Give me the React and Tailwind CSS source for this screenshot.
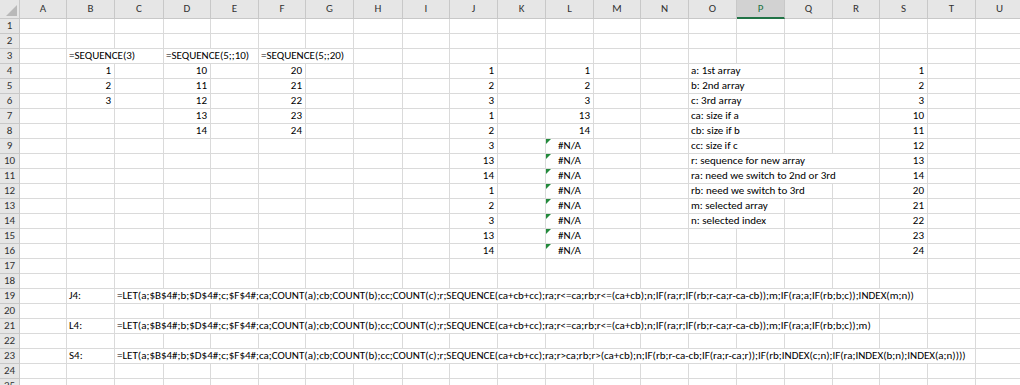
import React from "react";

const COLS = "ABCDEFGHIJKLMNOPQRSTU".split("");
const SPAN = {
  1: "col-span-1",
  2: "col-span-2",
  3: "col-span-3",
  4: "col-span-4",
  16: "col-span-16",
  17: "col-span-17",
  18: "col-span-18",
};

const ci = (c) => COLS.indexOf(c);

const data = {};
const put = (ref, v) => {
  const m = ref.match(/^([A-U])(\d+)$/);
  const r = +m[2];
  data[r] = data[r] || {};
  data[r][ci(m[1])] = v;
};

const num = (t) => ({ t: String(t), a: "r", s: 1 });
const txt = (t, s) => ({ t, a: "l", s });

put("B3", txt("=SEQUENCE(3)", 2));
put("D3", txt("=SEQUENCE(5;;10)", 2));
put("F3", txt("=SEQUENCE(5;;20)", 2));
[1, 2, 3].forEach((v, i) => put("B" + (4 + i), num(v)));
[10, 11, 12, 13, 14].forEach((v, i) => put("D" + (4 + i), num(v)));
[20, 21, 22, 23, 24].forEach((v, i) => put("F" + (4 + i), num(v)));
[1, 2, 3, 1, 2, 3, 13, 14, 1, 2, 3, 13, 14].forEach((v, i) =>
  put("J" + (4 + i), num(v))
);
[1, 2, 3, 13, 14].forEach((v, i) => put("L" + (4 + i), num(v)));
for (let r = 9; r <= 16; r++) put("L" + r, { t: "#N/A", a: "c", s: 1, tri: true });
[1, 2, 3, 10, 11, 12, 13, 14, 20, 21, 22, 23, 24].forEach((v, i) =>
  put("S" + (4 + i), num(v))
);
[
  ["a: 1st array", 2],
  ["b: 2nd array", 2],
  ["c: 3rd array", 2],
  ["ca: size if a", 2],
  ["cb: size if b", 2],
  ["cc: size if c", 2],
  ["r: sequence for new array", 4],
  ["ra: need we switch to 2nd or 3rd", 4],
  ["rb: need we switch to 3rd", 3],
  ["m: selected array", 2],
  ["n: selected index", 2],
].forEach(([t, s], i) => put("O" + (4 + i), txt(t, s)));

put("B19", txt("J4:", 1));
put(
  "C19",
  txt(
    "=LET(a;$B$4#;b;$D$4#;c;$F$4#;ca;COUNT(a);cb;COUNT(b);cc;COUNT(c);r;SEQUENCE(ca+cb+cc);ra;r<=ca;rb;r<=(ca+cb);n;IF(ra;r;IF(rb;r-ca;r-ca-cb));m;IF(ra;a;IF(rb;b;c));INDEX(m;n))",
    17
  )
);
put("B21", txt("L4:", 1));
put(
  "C21",
  txt(
    "=LET(a;$B$4#;b;$D$4#;c;$F$4#;ca;COUNT(a);cb;COUNT(b);cc;COUNT(c);r;SEQUENCE(ca+cb+cc);ra;r<=ca;rb;r<=(ca+cb);n;IF(ra;r;IF(rb;r-ca;r-ca-cb));m;IF(ra;a;IF(rb;b;c));m)",
    16
  )
);
put("B23", txt("S4:", 1));
put(
  "C23",
  txt(
    "=LET(a;$B$4#;b;$D$4#;c;$F$4#;ca;COUNT(a);cb;COUNT(b);cc;COUNT(c);r;SEQUENCE(ca+cb+cc);ra;r>ca;rb;r>(ca+cb);n;IF(rb;r-ca-cb;IF(ra;r-ca;r));IF(rb;INDEX(c;n);IF(ra;INDEX(b;n);INDEX(a;n))))",
    18
  )
);

function Row({ r }) {
  const row = data[r] || {};
  const cells = [];
  let i = 0;
  while (i < COLS.length) {
    const c = row[i];
    const s = c ? c.s : 1;
    cells.push(
      <div
        key={i}
        className={
          "relative h-[15px] border-r border-b border-[#dadada] bg-white overflow-hidden whitespace-nowrap leading-[14px] text-black " +
          SPAN[s] +
          (c && c.a === "r" ? " text-right pr-[3px]" : "") +
          (c && c.a === "l" ? " text-left pl-[2px]" : "") +
          (c && c.a === "c" ? " text-center" : "")
        }
      >
        {c && c.tri && (
          <span className="absolute left-0 top-0 h-0 w-0 border-t-[5px] border-r-[5px] border-t-[#238a3c] border-r-transparent" />
        )}
        {c ? c.t : null}
      </div>
    );
    i += s;
  }
  return (
    <>
      <div className="h-[15px] border-r border-b border-[#c8c8c8] bg-[#e6e6e6] text-center leading-[14px] text-[#333]">
        {r}
      </div>
      {cells}
    </>
  );
}

export default function App() {
  const rows = [];
  for (let r = 1; r <= 25; r++) rows.push(<Row key={r} r={r} />);
  return (
    <div
      className="w-[1020px] h-[385px] overflow-hidden bg-white text-[11px]"
      style={{ fontFamily: '"Carlito", "Liberation Sans", Arial, sans-serif' }}
    >
      <div className="grid grid-cols-[20px_47px_48px_49px_47px_48px_47px_48px_49px_47px_48px_48px_48px_47px_48px_48px_48px_48px_47px_48px_48px_48px]">
        <div className="relative h-[19px] border-r border-b border-[#c8c8c8] bg-[#e6e6e6]">
          <svg className="absolute right-[2px] bottom-[2px]" width="11" height="11" viewBox="0 0 11 11">
            <polygon points="11,0 11,11 0,11" fill="#b9b9b9" />
          </svg>
        </div>
        {COLS.map((c) => (
          <div
            key={c}
            className={
              "h-[19px] border-r border-[#c8c8c8] text-center " +
              (c === "P"
                ? "bg-[#d2d2d2] text-[#217346] border-b-2 border-b-[#217346] leading-[17px]"
                : "bg-[#e6e6e6] text-[#333] border-b border-b-[#c8c8c8] leading-[18px]")
            }
          >
            {c}
          </div>
        ))}
        {rows}
      </div>
    </div>
  );
}
